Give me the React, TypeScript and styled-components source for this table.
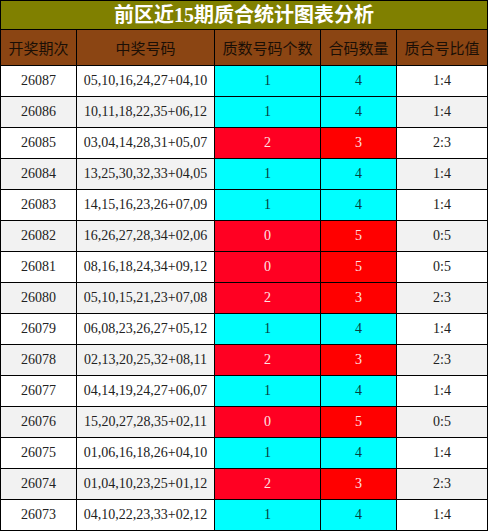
import styled, { createGlobalStyle } from 'styled-components';

const GlobalStyle = createGlobalStyle`
  html, body {
    margin: 0;
    padding: 0;
    background: #fff;
  }
`;

const Table = styled.table`
  width: 488px;
  border-collapse: collapse;
  table-layout: fixed;
  font-family: "Liberation Serif", "Noto Sans CJK SC", serif;
`;
const TitleRow = styled.tr`
  height: 29px;
`;
const Title = styled.th`
  background-color: #808000;
  color: #fff;
  font-size: 20px;
  font-weight: 700;
  text-align: center;
  border: 1px solid #000;
  padding: 0;
  line-height: 26px;
`;
const HeadRow = styled.tr`
  height: 36px;
`;
const HeadCell = styled.th`
  background-color: #8b4513;
  color: #1a0f06;
  font-size: 15px;
  font-weight: 400;
  border: 1px solid #000;
  padding: 0;
`;
const Row = styled.tr`
  height: 31px;
`;
const Cell = styled.td<{ $alt?: boolean }>`
  background-color: ${(props) => (props.$alt ? '#f2f2f2' : '#fff')};
  color: #222;
  font-size: 14px;
  text-align: center;
  border: 1px solid #000;
  padding: 0;
`;
const CountCell = styled.td<{ $hot: boolean; $shade: string }>`
  background-color: ${(props) => (props.$hot ? props.$shade : '#00ffff')};
  color: ${(props) => (props.$hot ? '#ffe4e4' : '#063f3f')};
  font-size: 14px;
  text-align: center;
  border: 1px solid #000;
  padding: 0;
`;

const rows: [string, string, number][] = [
  ['26087', '05,10,16,24,27+04,10', 1],
  ['26086', '10,11,18,22,35+06,12', 1],
  ['26085', '03,04,14,28,31+05,07', 2],
  ['26084', '13,25,30,32,33+04,05', 1],
  ['26083', '14,15,16,23,26+07,09', 1],
  ['26082', '16,26,27,28,34+02,06', 0],
  ['26081', '08,16,18,24,34+09,12', 0],
  ['26080', '05,10,15,21,23+07,08', 2],
  ['26079', '06,08,23,26,27+05,12', 1],
  ['26078', '02,13,20,25,32+08,11', 2],
  ['26077', '04,14,19,24,27+06,07', 1],
  ['26076', '15,20,27,28,35+02,11', 0],
  ['26075', '01,06,16,18,26+04,10', 1],
  ['26074', '01,04,10,23,25+01,12', 2],
  ['26073', '04,10,22,23,33+02,12', 1],
];

function App() {
  return (
    <>
      <GlobalStyle />
      <Table>
        <colgroup>
          <col style={{ width: 76 }} />
          <col style={{ width: 138 }} />
          <col style={{ width: 106 }} />
          <col style={{ width: 76 }} />
          <col />
        </colgroup>
        <thead>
          <TitleRow>
            <Title colSpan={5}>前区近15期质合统计图表分析</Title>
          </TitleRow>
          <HeadRow>
            <HeadCell>开奖期次</HeadCell>
            <HeadCell>中奖号码</HeadCell>
            <HeadCell>质数号码个数</HeadCell>
            <HeadCell>合码数量</HeadCell>
            <HeadCell>质合号比值</HeadCell>
          </HeadRow>
        </thead>
        <tbody>
          {rows.map(([issue, nums, prime], i) => {
            const alt = i % 2 === 1;
            const hot = prime !== 1;
            return (
              <Row key={issue}>
                <Cell $alt={alt}>{issue}</Cell>
                <Cell $alt={alt}>{nums}</Cell>
                <CountCell $hot={hot} $shade="#ff0022">{prime}</CountCell>
                <CountCell $hot={hot} $shade="#ff0000">{5 - prime}</CountCell>
                <Cell $alt={alt}>{prime}:{5 - prime}</Cell>
              </Row>
            );
          })}
        </tbody>
      </Table>
    </>
  );
}

export default App;
